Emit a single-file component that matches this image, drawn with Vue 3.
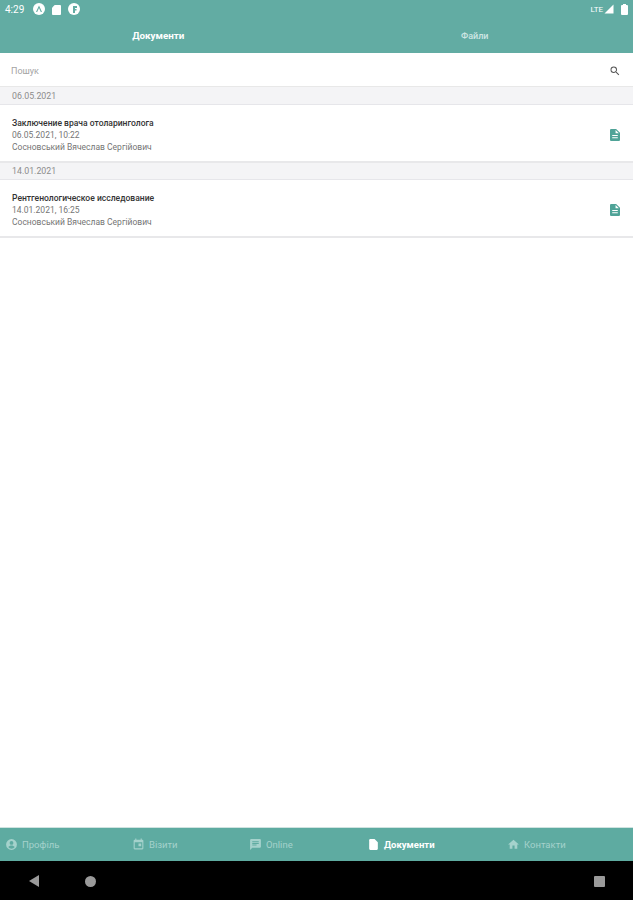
<script setup>
const groups = [
  {
    date: '06.05.2021',
    title: 'Заключение врача отоларинголога',
    time: '06.05.2021, 10:22',
    doctor: 'Сосновський Вячеслав Сергійович',
  },
  {
    date: '14.01.2021',
    title: 'Рентгенологическое исследование',
    time: '14.01.2021, 16:25',
    doctor: 'Сосновський Вячеслав Сергійович',
  },
]

const navItems = [
  { label: 'Профіль', width: 127, path: 'M12 2a10 10 0 1 0 0 20 10 10 0 0 0 0-20zm0 3.5a3.5 3.5 0 1 1 0 7 3.5 3.5 0 0 1 0-7zm0 14.2a7.7 7.7 0 0 1-6-2.9c1.2-2 3.8-3 6-3s4.800 1 6 3a7.700 7.700 0 0 1-6 2.900z' },
  { label: 'Візити', width: 117, path: 'M19 3h-1V1h-2v2H8V1H6v2H5a2 2 0 0 0-2 2v14a2 2 0 0 0 2 2h14a2 2 0 0 0 2-2V5a2 2 0 0 0-2-2zm0 16H5V8h14v11zm-7-9h5v5h-5z' },
  { label: 'Online', width: 118, path: 'M20 2H4a2 2 0 0 0-2 2v18l4-4h14a2 2 0 0 0 2-2V4a2 2 0 0 0-2-2zM6 9h12v2H6zm8 5H6v-2h8zm4-6H6V6h12z' },
  { label: 'Документи', width: 140, active: true, path: 'M14 2H6a2 2 0 0 0-2 2v16a2 2 0 0 0 2 2h12a2 2 0 0 0 2-2V8z' },
  { label: 'Контакти', width: 126, path: 'M10 20v-6h4v6h5v-8h3L12 3 2 12h3v8z' },
]
</script>

<template>
  <div class="screen">
    <header class="top">
      <div class="status">
        <span class="clock">4:29</span>
        <span class="dot"><svg viewBox="0 0 12 12" width="12" height="12"><path d="M6 2.500 9 9H7.800L6 5 4.200 9H3z" fill="#62aca3" /></svg></span>
        <svg class="sim" viewBox="0 0 10 12" width="9" height="11"><path d="M3 1h6a1 1 0 0 1 1 1v9a1 1 0 0 1-1 1H1a1 1 0 0 1-1-1V4z" fill="#fff" /></svg>
        <span class="dot"><svg viewBox="0 0 12 12" width="12" height="12"><path d="M5 3h4v2H7v1h1.500v1.500H7V10H5z" fill="#62aca3" /></svg></span>
        <span class="spacer"></span>
        <span class="lte">LTE</span>
        <svg viewBox="0 0 10 10" width="10" height="10"><path d="M9.500.5v9H.5z" fill="#fff" /></svg>
        <svg class="battery" viewBox="0 0 7 11" width="7" height="11"><path d="M2 0h3v1h1a1 1 0 0 1 1 1v8a1 1 0 0 1-1 1H1a1 1 0 0 1-1-1V2a1 1 0 0 1 1-1h1z" fill="#fff" /></svg>
      </div>
      <div class="tabs">
        <div class="tab active">Документи</div>
        <div class="tab">Файли</div>
      </div>
    </header>

    <div class="search">
      <span>Пошук</span>
      <svg viewBox="0 0 24 24" width="12" height="12"><path d="M15.500 14h-.79l-.28-.27A6.470 6.470 0 0 0 16 9.500 6.500 6.500 0 1 0 9.500 16c1.610 0 3.090-.59 4.230-1.570l.27.28v.79l5 4.990L20.490 19l-4.990-5zm-6 0C7.010 14 5 11.990 5 9.500S7.010 5 9.500 5 14 7.010 14 9.500 11.990 14 9.500 14z" fill="#555" /></svg>
    </div>

    <main class="list">
      <section v-for="group in groups" :key="group.date">
        <div class="date">{{ group.date }}</div>
        <div class="card">
          <div class="info">
            <div class="title">{{ group.title }}</div>
            <div class="line">{{ group.time }}</div>
            <div class="line">{{ group.doctor }}</div>
          </div>
          <svg class="doc" viewBox="3 1 18 22" width="10" height="12" preserveAspectRatio="none"><path d="M14 1H5a2 2 0 0 0-2 2v18a2 2 0 0 0 2 2h14a2 2 0 0 0 2-2V8zM7 12h10v2H7zm0 4h10v2H7zm6-7V3l6 6z" fill="#4fa397" /></svg>
        </div>
      </section>
    </main>

    <nav class="bottom">
      <div
        v-for="item in navItems"
        :key="item.label"
        class="nav-item"
        :class="{ active: item.active }"
        :style="{ width: item.width + 'px' }"
      >
        <svg viewBox="0 0 24 24" width="13" height="13"><path :d="item.path" fill="currentColor" /></svg>
        <span>{{ item.label }}</span>
      </div>
    </nav>

    <div class="system">
      <svg viewBox="0 0 12 14" width="12" height="14"><path d="M11 1v12L1 7z" fill="#9a9a9a" /></svg>
      <span class="circle"></span>
      <span class="square"></span>
    </div>
  </div>
</template>

<style scoped>
.screen {
  width: 633px;
  height: 900px;
  display: flex;
  flex-direction: column;
  background: #fff;
  font-family: Roboto, "Liberation Sans", sans-serif;
  overflow: hidden;
}

.top {
  height: 53px;
  background: #62aca3;
  color: #fff;
  flex: none;
}

.status {
  height: 18px;
  display: flex;
  align-items: center;
  gap: 7px;
  padding: 0 5px;
}

.clock {
  font-size: 10px;
  margin-right: 2px;
}

.dot {
  width: 12px;
  height: 12px;
  border-radius: 50%;
  background: #fff;
  display: flex;
}

.spacer {
  flex: 1;
}

.lte {
  font-size: 8px;
  margin-right: -6px;
}

.tabs {
  display: flex;
  height: 35px;
}

.tab {
  width: 317px;
  display: flex;
  align-items: center;
  justify-content: center;
  font-size: 9px;
  font-weight: 500;
  color: #cfe6e3;
}

.tab.active {
  color: #fff;
  font-weight: 700;
  font-size: 9.800px;
}

.search {
  height: 34px;
  flex: none;
  display: flex;
  align-items: center;
  justify-content: space-between;
  padding: 2px 12px 0 11px;
  font-size: 9px;
  color: #a3a3a3;
  box-sizing: border-box;
  border-bottom: 1px solid #e8e8e8;
}

.list {
  flex: 1;
}

.date {
  height: 18px;
  display: flex;
  align-items: center;
  padding-left: 12px;
  background: #f4f4f6;
  color: #8c8c8c;
  font-size: 8.800px;
  box-sizing: border-box;
  border-bottom: 1px solid #e6e6ea;
}

section + section .date {
  height: 17px;
}

.card {
  height: 58px;
  box-sizing: border-box;
  display: flex;
  align-items: center;
  justify-content: space-between;
  padding: 4px 13px 0 12px;
  background: #fff;
  border-bottom: 2px solid #e8e8ea;
}

.title {
  font-size: 8.550px;
  font-weight: 500;
  color: #333;
  line-height: 12px;
}

.line {
  font-size: 8.500px;
  color: #757575;
  line-height: 12px;
}

.bottom {
  height: 34px;
  flex: none;
  display: flex;
  padding-left: 5px;
  background: #5eaba1;
  border-top: 1px solid #cfe3e0;
  box-sizing: border-box;
}

.nav-item {
  display: flex;
  align-items: center;
  gap: 4px;
  font-size: 9.500px;
  color: #a5d2cc;
}

.nav-item.active {
  color: #fff;
  font-weight: 700;
}

.system {
  height: 39px;
  flex: none;
  background: #000;
  display: flex;
  align-items: center;
  padding: 1px 0 0 28px;
  box-sizing: border-box;
}

.circle {
  width: 11px;
  height: 11px;
  border-radius: 50%;
  background: #9a9a9a;
  margin-left: 45px;
}

.square {
  width: 11px;
  height: 11px;
  border-radius: 1px;
  background: #9a9a9a;
  margin-left: 498px;
}
</style>
